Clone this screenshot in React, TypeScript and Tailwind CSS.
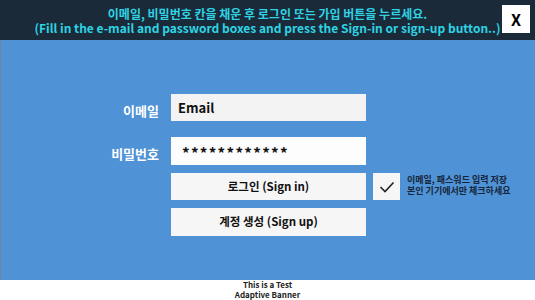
import React from "react";

const App = () => {
  return (
    <div
      className="w-[535px] h-[300px] flex flex-col overflow-hidden bg-white"
      style={{ fontFamily: '"Noto Sans CJK KR", "Noto Sans", sans-serif' }}
    >
      <header className="relative h-[40px] shrink-0 bg-[#1a2a39] flex flex-col items-center pt-[7px]">
        <p className="font-bold text-[12px] leading-[14px] text-[#2fd3e3]">
          이메일, 비밀번호 칸을 채운 후 로그인 또는 가입 버튼을 누르세요.
        </p>
        <p className="font-bold text-[12px] leading-[13px] text-[#2fd3e3]">
          (Fill in the e-mail and password boxes and press the Sign-in or sign-up button..)
        </p>
        <button className="absolute right-[5px] top-[5px] w-[28px] h-[28px] bg-white flex items-center justify-center font-bold text-[16px] text-black">
          X
        </button>
      </header>

      <main className="h-[240px] shrink-0 bg-[#4f92d5] border-l border-[#6f86a0] pt-[54px]">
        <div className="grid grid-cols-[163px_195px_27px_auto] gap-x-[7px] items-center">
          <span className="pt-[6px] pr-[5px] text-right font-bold text-[13px] text-white">이메일</span>
          <div className="h-[27px] bg-[#f3f3f3] flex items-center pl-[7px] font-bold text-[13px] text-[#111]">
            Email
          </div>
          <div />
          <div />

          <span className="mt-[16px] pt-[6px] pr-[5px] text-right font-bold text-[13px] text-white">
            비밀번호
          </span>
          <div className="mt-[16px] h-[28px] bg-[#fdfdfd] flex items-center pl-[11px] pt-[4px] font-bold text-[15px] tracking-[1.3px] text-[#111]">
            ************
          </div>
          <div />
          <div />

          <div />
          <button className="mt-[8px] h-[27px] bg-[#f6f6f6] font-bold text-[11.5px] text-[#111]">
            로그인 (Sign in)
          </button>
          <div className="mt-[8px] h-[27px] bg-[#f6f6f6] flex items-center justify-center">
            <svg width="16" height="12" viewBox="0 0 16 12" fill="none">
              <path d="M1.5 6 L6 10.5 L14.5 1.5" stroke="#222" strokeWidth="1.6" />
            </svg>
          </div>
          <div className="mt-[5px] flex flex-col font-bold text-[9px] leading-[11px] text-[#16263a]">
            <span>이메일, 패스워드 입력 저장</span>
            <span>본인 기기에서만 체크하세요</span>
          </div>

          <div />
          <button className="mt-[8px] h-[28px] bg-[#f6f6f6] font-bold text-[11.5px] text-[#111]">
            계정 생성 (Sign up)
          </button>
          <div />
          <div />
        </div>
      </main>

      <footer className="flex-1 flex flex-col items-center justify-center font-bold text-[8px] leading-[10px] text-[#222]">
        <span>This is a Test</span>
        <span>Adaptive Banner</span>
      </footer>
    </div>
  );
};

export default App;
